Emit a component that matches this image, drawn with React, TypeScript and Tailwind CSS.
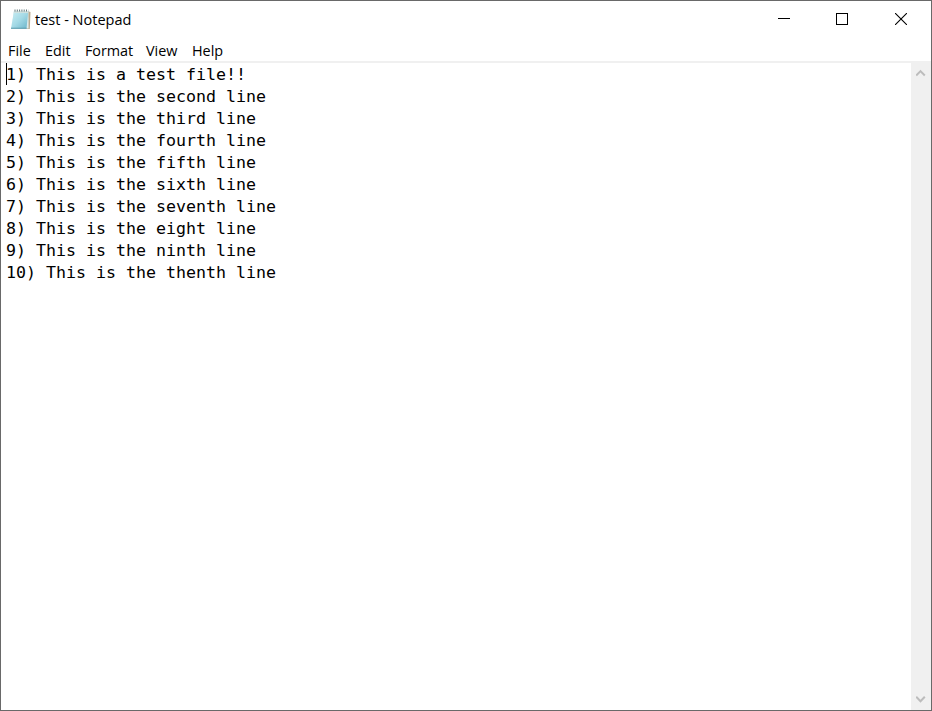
const lines = [
  '1) This is a test file!!',
  '2) This is the second line',
  '3) This is the third line',
  '4) This is the fourth line',
  '5) This is the fifth line',
  '6) This is the sixth line',
  '7) This is the seventh line',
  '8) This is the eight line',
  '9) This is the ninth line',
  '10) This is the thenth line',
];

function NotepadIcon() {
  return (
    <svg className="mt-0.5" width="22" height="22" viewBox="0 0 22 22">
      <defs>
        <linearGradient id="page" x1="0" y1="0" x2="1" y2="1">
          <stop offset="0" stopColor="#c9edf3" />
          <stop offset="0.5" stopColor="#a5dae6" />
          <stop offset="1" stopColor="#6ab5ca" />
        </linearGradient>
      </defs>
      <path d="M17 2 L20.5 3 L19.8 20 L16 20 Z" fill="#b9aa91" />
      <path d="M3.5 2.5 H18.5 L18.6 19.5 H2 Z" fill="#dcebec" />
      <path d="M4 2 H18.3 L16.5 19.5 H1 Z" fill="url(#page)" />
      <path d="M1 18.8 H16.6 L16.5 19.8 H1 Z" fill="#5799ab" />
      <path d="M4 3 H18" stroke="#cfe0df" strokeWidth="2" />
      <path d="M4.5 1.6 H18.5" stroke="#62777b" strokeWidth="2" strokeDasharray="1 1.3" />
    </svg>
  );
}

function TitleBar() {
  return (
    <header className="flex h-9 shrink-0 items-center pl-[9px] font-['Open_Sans','Noto_Sans',sans-serif]">
      <NotepadIcon />
      <h1 className="ml-[3px] mt-0.5 flex-1 whitespace-nowrap text-[14.5px] leading-5">test - Notepad</h1>
      <div className="flex h-full">
        <button className="flex h-full w-[58px] items-center justify-center" aria-label="Minimize">
          <svg width="12" height="12" viewBox="0 0 12 12" stroke="#000" fill="none" shapeRendering="crispEdges"><path d="M0 5.5H12" /></svg>
        </button>
        <button className="flex h-full w-[58px] items-center justify-center" aria-label="Maximize">
          <svg width="12" height="12" viewBox="0 0 12 12" stroke="#000" fill="none" shapeRendering="crispEdges"><path d="M.5.5H11.5V11.5H.5Z" /></svg>
        </button>
        <button className="flex h-full w-[60px] items-center justify-center" aria-label="Close">
          <svg width="12" height="12" viewBox="0 0 12 12" stroke="#000" strokeWidth="1.1" fill="none"><path d="M0 0L12 12M12 0L0 12" /></svg>
        </button>
      </div>
    </header>
  );
}

function MenuBar() {
  return (
    <nav className="flex h-[26px] shrink-0 gap-[14px] border-b-2 border-[#f0f0f0] pl-[7px] font-['Open_Sans','Noto_Sans',sans-serif] text-[14.4px] leading-[27px]">
      <span className="w-[23px]">File</span>
      <span className="w-[26px]">Edit</span>
      <span className="w-[47px] tracking-[-0.08px]">Format</span>
      <span className="w-[32px]">View</span>
      <span className="w-[32px]">Help</span>
    </nav>
  );
}

export default function App() {
  return (
    <div className="flex h-[711px] w-[932px] flex-col overflow-hidden border border-[#696969] bg-white text-black">
      <TitleBar />
      <MenuBar />
      <main className="flex min-h-0 flex-1">
        <div className="relative flex-1 pl-[5px] pt-px font-['DejaVu_Sans_Mono',monospace] text-[16.61px] leading-[22px]">
          <span className="absolute left-[5px] top-0 h-[22px] w-px bg-black" />
          {lines.map((line) => (
            <p key={line} className="h-[22px] whitespace-pre">{line}</p>
          ))}
        </div>
        <div className="flex w-5 flex-col items-center justify-between bg-[#f0f0f0] pb-[7px] pt-[6px]">
          <svg width="10" height="8" viewBox="0 0 10 8" fill="none" stroke="#bcbcbc" strokeWidth="2"><path d="M.2 6.5L4.5 2.1L8.8 6.5" /></svg>
          <svg width="10" height="8" viewBox="0 0 10 8" fill="none" stroke="#bcbcbc" strokeWidth="2"><path d="M.2 1.8L4.5 6.2L8.8 1.8" /></svg>
        </div>
      </main>
    </div>
  );
}
